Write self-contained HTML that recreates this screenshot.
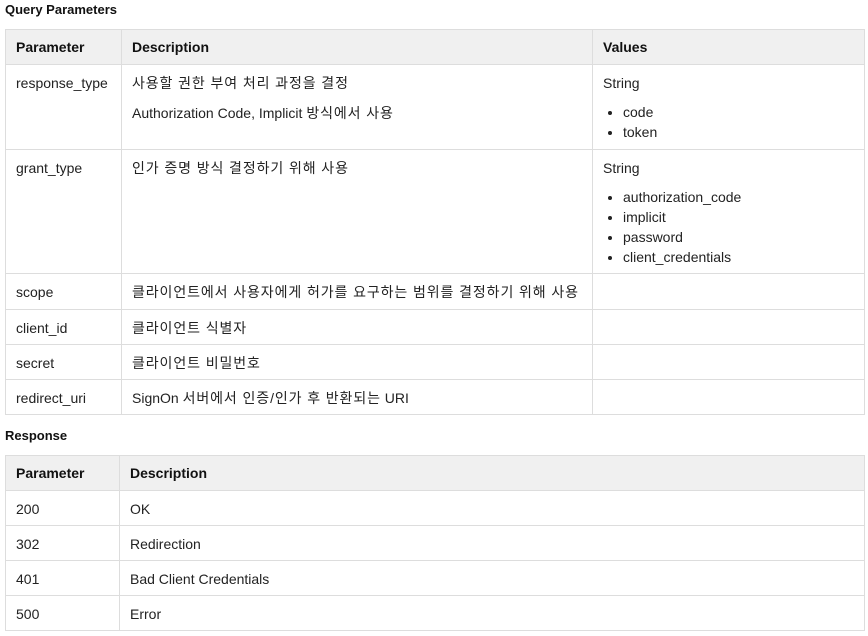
<!DOCTYPE html>
<html><head><meta charset="utf-8"><style>
body{margin:0;background:#fff;font-family:"Liberation Sans","Noto Sans CJK KR",sans-serif;font-size:14px;color:#222;}
h4{position:absolute;left:5px;margin:0;font-size:13px;font-weight:bold;color:#111;}
table{position:absolute;left:5px;border-collapse:collapse;width:859px;table-layout:fixed;}
td,th{border:1px solid #ddd;vertical-align:top;padding:9px 10px 0 10px;text-align:left;line-height:18px;box-sizing:border-box;}
th{background:#f0f0f0;font-weight:bold;color:#111;vertical-align:middle;padding-top:0;}
p{margin:0 0 12px 0;}
ul{margin:12px 0 0 0;padding-left:20px;}
li{line-height:20px;}
.k{letter-spacing:0.9px;}
</style></head><body>
<h4 style="top:2px">Query Parameters</h4>
<table style="top:29px">
<col style="width:116px"><col style="width:471px"><col style="width:272px">
<tr style="height:35px"><th>Parameter</th><th>Description</th><th>Values</th></tr>
<tr style="height:85px"><td>response_type</td><td><p class="k">사용할 권한 부여 처리 과정을 결정</p><p>Authorization Code, Implicit <span class="k">방식에서 사용</span></p></td><td>String<ul style="margin-top:10px"><li>code</li><li>token</li></ul></td></tr>
<tr style="height:124px"><td>grant_type</td><td class="k">인가 증명 방식 결정하기 위해 사용</td><td>String<ul style="margin-top:10px"><li>authorization_code</li><li>implicit</li><li>password</li><li>client_credentials</li></ul></td></tr>
<tr style="height:36px"><td>scope</td><td class="k">클라이언트에서 사용자에게 허가를 요구하는 범위를 결정하기 위해 사용</td><td></td></tr>
<tr style="height:35px"><td>client_id</td><td class="k">클라이언트 식별자</td><td></td></tr>
<tr style="height:35px"><td>secret</td><td class="k">클라이언트 비밀번호</td><td></td></tr>
<tr style="height:35px"><td>redirect_uri</td><td>SignOn <span class="k">서버에서 인증/인가 후 반환되는</span> URI</td><td></td></tr>
</table>
<h4 style="top:428px">Response</h4>
<table style="top:455px">
<col style="width:114px"><col style="width:745px">
<tr style="height:35px"><th>Parameter</th><th>Description</th></tr>
<tr style="height:35px"><td>200</td><td>OK</td></tr>
<tr style="height:35px"><td>302</td><td>Redirection</td></tr>
<tr style="height:35px"><td>401</td><td>Bad Client Credentials</td></tr>
<tr style="height:35px"><td>500</td><td>Error</td></tr>
</table>
</body></html>
